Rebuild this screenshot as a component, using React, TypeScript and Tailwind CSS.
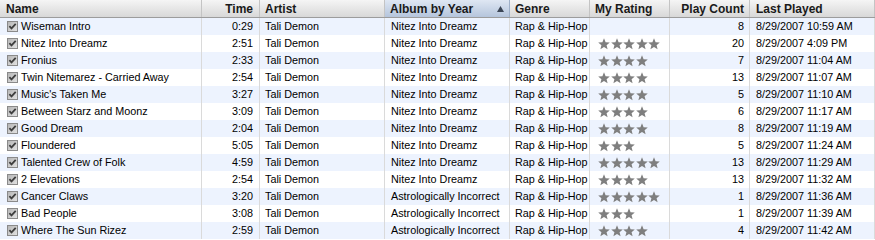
import React from "react";

type Track = {
  name: string;
  time: string;
  album: string;
  rating: number;
  plays: number;
  last: string;
};

const tracks: Track[] = [
  { name: "Wiseman Intro", time: "0:29", album: "Nitez Into Dreamz", rating: 0, plays: 8, last: "8/29/2007 10:59 AM" },
  { name: "Nitez Into Dreamz", time: "2:51", album: "Nitez Into Dreamz", rating: 5, plays: 20, last: "8/29/2007 4:09 PM" },
  { name: "Fronius", time: "2:33", album: "Nitez Into Dreamz", rating: 4, plays: 7, last: "8/29/2007 11:04 AM" },
  { name: "Twin Nitemarez - Carried Away", time: "2:54", album: "Nitez Into Dreamz", rating: 4, plays: 13, last: "8/29/2007 11:07 AM" },
  { name: "Music's Taken Me", time: "3:27", album: "Nitez Into Dreamz", rating: 4, plays: 5, last: "8/29/2007 11:10 AM" },
  { name: "Between Starz and Moonz", time: "3:09", album: "Nitez Into Dreamz", rating: 4, plays: 6, last: "8/29/2007 11:17 AM" },
  { name: "Good Dream", time: "2:04", album: "Nitez Into Dreamz", rating: 4, plays: 8, last: "8/29/2007 11:19 AM" },
  { name: "Floundered", time: "5:05", album: "Nitez Into Dreamz", rating: 3, plays: 5, last: "8/29/2007 11:24 AM" },
  { name: "Talented Crew of Folk", time: "4:59", album: "Nitez Into Dreamz", rating: 5, plays: 13, last: "8/29/2007 11:29 AM" },
  { name: "2 Elevations", time: "2:54", album: "Nitez Into Dreamz", rating: 4, plays: 13, last: "8/29/2007 11:32 AM" },
  { name: "Cancer Claws", time: "3:20", album: "Astrologically Incorrect", rating: 5, plays: 1, last: "8/29/2007 11:36 AM" },
  { name: "Bad People", time: "3:08", album: "Astrologically Incorrect", rating: 3, plays: 1, last: "8/29/2007 11:39 AM" },
  { name: "Where The Sun Rizez", time: "2:59", album: "Astrologically Incorrect", rating: 4, plays: 4, last: "8/29/2007 11:42 AM" },
];

const GRID = "grid grid-cols-[202px_58px_125px_125px_80px_80px_80px_125px]";

function CheckBox() {
  return (
    <svg width="11" height="11" viewBox="0 0 11 11" className="shrink-0">
      <defs>
        <linearGradient id="cb" x1="0" y1="0" x2="1" y2="1">
          <stop offset="0" stopColor="#b4b4b4" />
          <stop offset="1" stopColor="#e4e4e4" />
        </linearGradient>
      </defs>
      <rect x="0.5" y="0.5" width="10" height="10" fill="url(#cb)" stroke="#8a8a8a" />
      <path d="M2.4 5.2 L4.5 7.4 L8.7 2.9" fill="none" stroke="#3e3e3e" strokeWidth="1.8" />
    </svg>
  );
}

function Star() {
  return (
    <svg width="12" height="12" viewBox="1 1.5 22 21" className="shrink-0">
      <path
        d="M12 1.5 L14.9 8.6 L22.6 9.2 L16.7 14.2 L18.6 21.8 L12 17.7 L5.4 21.8 L7.3 14.2 L1.4 9.2 L9.1 8.6 Z"
        fill="#7f7f7f"
      />
    </svg>
  );
}

export default function App() {
  const head = "h-[17px] flex items-center border-r border-[#c4c4c4] bg-gradient-to-b from-[#f5f5f5] to-[#d8d8d8] text-[12px] font-bold text-[#1a1a1a] whitespace-nowrap";
  const cell = "h-[17px] flex items-center border-r border-[#dadada] whitespace-nowrap overflow-hidden";

  return (
    <div className="w-[875px] h-[240px] bg-white overflow-hidden text-black text-[10.8px]" style={{ fontFamily: '"Liberation Sans", Arial, sans-serif' }}>
      {/* header */}
      <div className={`${GRID} border-b border-[#9c9c9c]`}>
        <div className={`${head} pl-[6px]`}>Name</div>
        <div className={`${head} justify-end pr-[6px]`}>Time</div>
        <div className={`${head} pl-[5px]`}>Artist</div>
        <div className="h-[17px] flex items-center justify-between border-r border-[#9fb0c8] bg-gradient-to-b from-[#dfe7f3] to-[#b5c5dc] text-[12px] font-bold text-[#1a1a1a] pl-[5px] pr-[5px] whitespace-nowrap">
          <span>Album by Year</span>
          <svg width="7" height="6" viewBox="0 0 7 6">
            <path d="M3.5 0 L7 6 L0 6 Z" fill="#3c4656" />
          </svg>
        </div>
        <div className={`${head} pl-[5px]`}>Genre</div>
        <div className={`${head} pl-[5px]`}>My Rating</div>
        <div className={`${head} justify-end pr-[5px]`}>Play Count</div>
        <div className={`${head} pl-[6px]`}>Last Played</div>
      </div>

      {/* rows */}
      {tracks.map((t, i) => (
        <div key={t.name} className={`${GRID} ${i % 2 === 0 ? "bg-[#edf3fe]" : "bg-white"}`}>
          <div className={`${cell} pl-[7px] gap-[3px]`}>
            <CheckBox />
            <span>{t.name}</span>
          </div>
          <div className={`${cell} justify-end pr-[6px]`}>{t.time}</div>
          <div className={`${cell} pl-[5px]`}>Tali Demon</div>
          <div className={`${cell} pl-[6px]`}>{t.album}</div>
          <div className={`${cell} pl-[5px]`}>Rap &amp; Hip-Hop</div>
          <div className={`${cell} pl-[8px] gap-[0.5px]`}>
            {Array.from({ length: t.rating }).map((_, k) => (
              <Star key={k} />
            ))}
          </div>
          <div className={`${cell} justify-end pr-[5px]`}>{t.plays}</div>
          <div className={`${cell} pl-[6px]`}>{t.last}</div>
        </div>
      ))}
    </div>
  );
}
